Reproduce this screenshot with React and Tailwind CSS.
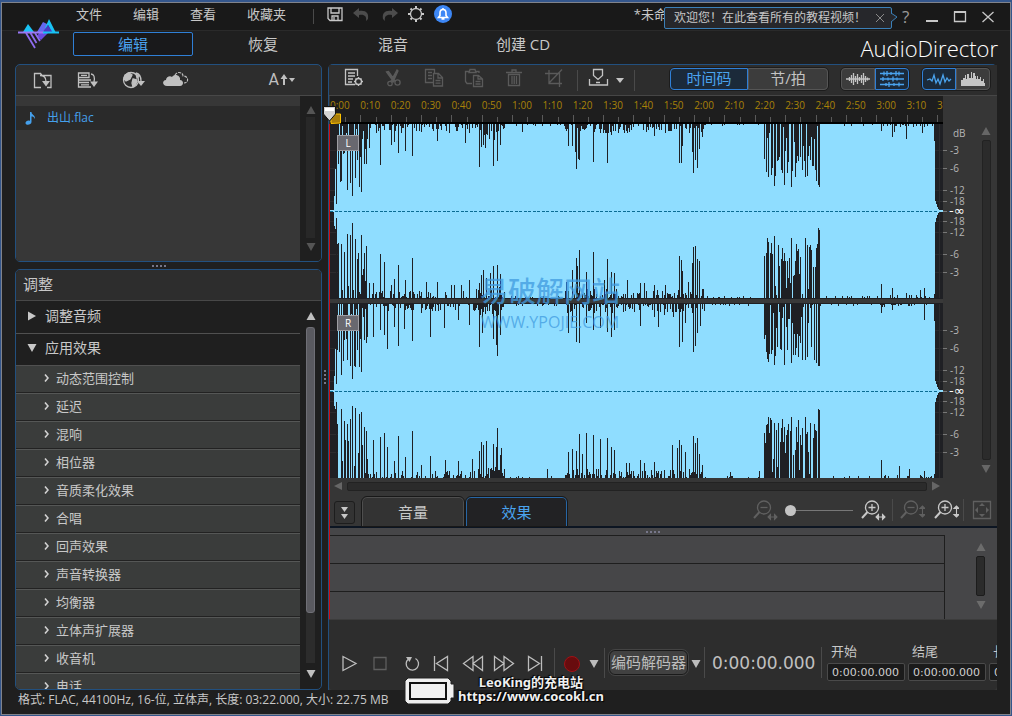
import React from "react";

const FONT = "font-['Open_Sans','Noto_Sans_CJK_SC',sans-serif]";

/* ---------- waveform data: [x, peak depth] pairs, one list per channel edge ---------- */

const L_TOP = [
  [6, 80], [8, 40], [10, 58], [11, 57], [13, 30], [17, 66], [20, 59], [22, 72], [25, 54], [27, 36], [29, 63], [31, 68], [34, 40], [36, 40],
  [46, 9], [50, 41], [61, 21], [64, 18], [68, 29], [71, 9], [75, 27], [82, 32], [91, 8], [107, 17], [119, 9], [135, 19], [139, 9],
  [149, 43], [151, 23], [153, 21], [155, 24], [159, 15], [163, 42], [164, 16], [167, 37], [170, 21], [192, 8], [238, 22], [242, 22],
  [245, 28], [246, 45], [248, 35], [249, 36], [256, 4], [263, 38], [277, 39], [281, 11], [294, 9], [297, 9], [323, 12],
  [334, 9], [348, 39], [350, 39], [351, 22], [361, 28], [362, 49], [364, 36], [366, 44], [368, 25], [371, 13],
  [433, 35], [435, 48], [437, 53], [440, 51], [441, 44], [443, 62], [447, 36], [450, 46], [451, 49], [453, 61], [456, 49], [460, 63],
  [463, 18], [465, 39], [467, 37], [469, 33], [471, 46], [474, 53], [476, 52], [479, 36], [482, 42], [485, 57], [487, 61], [488, 63],
  [550, 7], [561, 13], [563, 8], [575, 15], [591, 9],
];
const L_BOTTOM = [
  [6, 80], [8, 55], [11, 54], [14, 46], [17, 64], [20, 63], [22, 75], [25, 59], [28, 45], [31, 63], [34, 45], [36, 52],
  [39, 15], [43, 15], [50, 44], [54, 36], [61, 13], [64, 19], [68, 33], [75, 18], [82, 40], [96, 16], [107, 16], [121, 13], [124, 13],
  [131, 13], [139, 18], [149, 15], [151, 23], [153, 28], [156, 20], [160, 25], [163, 32], [167, 33], [170, 24], [236, 16],
  [242, 28], [246, 40], [247, 32], [249, 48], [256, 26], [263, 46], [274, 18], [277, 39], [281, 26], [284, 25], [297, 18], [309, 15],
  [313, 15], [323, 13], [334, 13], [348, 42], [350, 38], [351, 27], [357, 16], [361, 35], [362, 51], [364, 52], [366, 39], [368, 37], [372, 9],
  [433, 42], [435, 45], [436, 60], [437, 56], [439, 45], [440, 55], [443, 62], [447, 53], [450, 39], [451, 50], [453, 45], [456, 37],
  [460, 60], [464, 37], [466, 47], [467, 49], [469, 41], [474, 60], [476, 53], [479, 53], [482, 31], [485, 50], [486, 54], [487, 70], [488, 68],
  [550, 14], [561, 10], [575, 5], [589, 8], [593, 10],
];
const R_TOP = [
  [6, 80], [7, 46], [9, 48], [11, 71], [13, 57], [17, 56], [20, 62], [22, 75], [24, 62], [25, 63], [27, 46], [29, 63], [31, 68], [34, 36], [36, 39],
  [43, 33], [50, 26], [54, 31], [57, 45], [64, 23], [68, 42], [74, 25], [82, 37], [91, 9], [100, 33], [114, 24], [128, 16], [139, 21],
  [149, 43], [152, 29], [163, 35], [166, 41], [167, 52], [170, 31], [238, 29], [242, 18], [246, 38], [249, 39], [256, 19], [263, 26],
  [270, 24], [277, 28], [281, 33], [284, 26], [309, 22], [323, 13], [327, 23], [333, 11], [342, 13], [348, 43], [351, 38], [354, 19],
  [362, 48], [364, 42], [366, 29], [369, 22], [433, 35], [435, 48], [437, 58], [440, 50], [441, 46], [443, 61], [446, 43], [450, 46],
  [453, 61], [456, 46], [460, 59], [465, 44], [467, 53], [469, 39], [474, 56], [476, 53], [480, 43], [483, 56], [485, 59], [487, 62], [488, 62],
  [550, 9], [561, 6], [593, 16],
];
const R_BOTTOM = [
  [6, 76], [11, 69], [14, 57], [17, 54], [20, 59], [22, 72], [25, 70], [29, 64], [31, 66], [34, 51], [36, 47], [43, 38], [50, 41], [54, 45],
  [57, 31], [64, 17], [68, 42], [75, 21], [82, 47], [91, 13], [100, 22], [115, 18], [128, 17], [142, 19], [149, 27], [151, 36], [153, 33],
  [156, 37], [163, 34], [166, 31], [167, 50], [170, 23], [171, 30], [217, 9], [238, 26], [242, 29], [246, 27], [249, 44], [252, 24],
  [256, 45], [263, 43], [270, 39], [277, 40], [281, 31], [284, 28], [296, 15], [299, 15], [309, 18], [313, 15], [323, 16],
  [341, 33], [346, 30], [348, 38], [350, 33], [354, 26], [362, 42], [364, 35], [366, 40], [368, 24], [371, 13], [399, 6], [428, 7],
  [433, 45], [435, 53], [437, 61], [439, 60], [440, 58], [443, 55], [447, 55], [450, 50], [451, 59], [453, 51], [457, 54], [460, 61],
  [464, 28], [465, 51], [467, 58], [469, 43], [471, 50], [474, 61], [476, 46], [479, 55], [482, 40], [483, 54], [485, 47], [487, 69], [488, 68],
  [550, 18], [568, 12], [578, 9], [593, 7],
];

/* low-level texture between the named peaks: [from, to, density, depth] */
const TEXTURE = [
  [12, 40, 0.6, 40],
  [40, 146, 0.42, 7],
  [146, 175, 0.7, 11],
  [175, 235, 0.12, 2],
  [235, 290, 0.6, 9],
  [290, 345, 0.5, 8],
  [345, 374, 0.6, 9],
  [374, 432, 0.12, 2],
  [433, 489, 0.65, 56],
  [489, 548, 0.08, 2],
  [548, 604, 0.3, 3],
];

const noise = (n) => {
  const v = Math.sin(n * 127.1 + 31.7) * 43758.5453;
  return v - Math.floor(v);
};

function edgePath(peaks, seed, fromBottom) {
  const depth = {};
  TEXTURE.forEach(([a, b, density, max]) => {
    for (let x = a; x < b; x++) {
      if (noise(x + seed) < density) depth[x] = 1 + Math.floor(noise(x * 3 + seed) * max);
    }
  });
  peaks.forEach(([x, d]) => {
    depth[x] = d;
  });
  return Object.entries(depth)
    .map(([x, d]) => (fromBottom ? `M${x} 174v-${d}h1v${d}z` : `M${x} 0h1v${d}h-1z`))
    .join("");
}

const GRID = [26, 44, 66, 77, 97, 108, 130, 148];

function Channel({ name, top, bottom, seed }) {
  return (
    <div className="relative h-[174px] bg-[#1f2024]">
      <svg
        className="block h-full w-full"
        viewBox="0 0 612 174"
        preserveAspectRatio="none"
        shapeRendering="crispEdges"
        role="img"
        aria-label={`${name} channel waveform`}
      >
        {GRID.map((y) => (
          <path key={y} d={`M0 ${y}h612`} stroke="#2b2b2e" />
        ))}
        <path d="M609 0v174" stroke="#2b2b2e" />
        <path
          fill="#8fddff"
          d="M0 86h4V72h1V45h2V14h1V0h595v17h1v60h1v3h1v3h1v2h1v1h4v2h-4v1h-1v2h-1v3h-1v4h-1v72h-1v4H8v-54h-1v-15h-2V102h-1V88H0z"
        />
        <path fill="#1f2024" d={edgePath(top, seed, false)} />
        <path fill="#1f2024" d={edgePath(bottom, seed + 700, true)} />
        <path d="M0 87.5h606" stroke="#0a6c93" strokeDasharray="3 1.5" />
      </svg>
      <span className="absolute left-[7px] top-[11px] flex h-[16px] w-[22px] items-center justify-center border border-[#9d9da3] bg-[#68686f] text-[10px] leading-none text-white">
        {name}
      </span>
    </div>
  );
}

const DB = [
  [26, "-3"], [44, "-6"], [66, "-12"], [77, "-18"], [87, "-∞"], [97, "-18"], [108, "-12"], [130, "-6"], [148, "-3"],
];

function DbScale() {
  return (
    <svg className="h-[382px] w-[32px] shrink-0" viewBox="0 0 32 382" fontSize="10" fill="#b5b5b5">
      <text x="10" y="41">dB</text>
      {[28, 208].map((o) =>
        DB.map(([y, label], i) => (
          <g key={`${o}-${i}`}>
            <path d={`M0 ${o + y + 0.5}h4`} stroke="#777" />
            {label === "-∞" ? (
              <text x="6" y={o + y + 4} fill="#fff" fontSize="13" fontFamily="DejaVu Sans">
                {label}
              </text>
            ) : (
              <text x="7" y={o + y + 4}>
                {label}
              </text>
            )}
          </g>
        ))
      )}
    </svg>
  );
}

/* ---------- small shared parts ---------- */

function Tri({ dir, className = "" }) {
  const d = { up: "M5 1L9.500 9H.5z", down: "M.5 1h9L5 9z", right: "M1 .5l8 4.500-8 4.500z", left: "M9 1L1 5l8 4z" }[dir];
  return (
    <svg className={`h-[10px] w-[10px] shrink-0 ${className}`} viewBox="0 0 10 10" fill="currentColor" aria-hidden="true">
      <path d={d} />
    </svg>
  );
}

function IconButton({ label, className = "", children, w = 22, h = 20 }) {
  return (
    <button type="button" aria-label={label} className={`flex shrink-0 items-center justify-center ${className}`}>
      <svg width={w} height={h} viewBox={`0 0 ${w} ${h}`} fill="none" stroke="currentColor" strokeWidth="1.3" aria-hidden="true">
        {children}
      </svg>
    </button>
  );
}

const Dots = ({ vertical }) => (
  <span className={`flex gap-[2px] ${vertical ? "flex-col" : ""}`}>
    {[0, 1, 2, 3].map((i) => (
      <span key={i} className="h-[2px] w-[2px] bg-[#77778a]" />
    ))}
  </span>
);

const Divider = ({ className = "" }) => <span className={`w-px shrink-0 bg-[#4a4a4a] ${className}`} />;

/* ---------- header ---------- */

function Logo() {
  return (
    <svg className="absolute left-[15px] top-[13px] h-[36px] w-[44px]" viewBox="0 0 44 36" aria-hidden="true">
      <path d="M6 16l5-8 6 8z" fill="#19c3f5" />
      <path d="M20 16l6-10 4 2 2 8z" fill="#6468f2" />
      <path d="M28 12l4-9 7 14h-4l-4-8-2 4z" fill="#19c3f5" />
      <path d="M25 17l6-8 5 8z" fill="#4a3bc4" />
      <path d="M22 17h9l-7 7-4-4z" fill="#6a4ae0" />
      <path d="M9 17l9 15M13.500 17l6 10M18 17l5 8" stroke="#8e6cf0" strokeWidth="1.800" />
      <path d="M1 16.500h26" stroke="#9a78f5" strokeWidth="2" />
      <path d="M26 16.500h16" stroke="#19c3f5" strokeWidth="2" />
    </svg>
  );
}

function Header() {
  return (
    <header className="relative shrink-0">
      <div className="flex h-[28px] items-center border-b border-[#2a2a2a] bg-[#191919] pl-[74px] pr-[14px]">
        <nav className="flex items-center gap-[31px] pb-[5px] text-[13px] leading-none">
          {["文件", "编辑", "查看", "收藏夹"].map((m) => (
            <button type="button" key={m}>
              {m}
            </button>
          ))}
        </nav>
        <Divider className="ml-[27px] h-[15px]" />
        <div className="ml-[10px] flex items-center gap-[5px] pb-[6px]">
          <IconButton label="保存" className="text-[#c8c8c8]">
            <path d="M4 4h14v12.500H6L4 14.500zM7 4v5h8V4M8 16.500V12h6v4.500M10 13v3" strokeWidth="1.300" />
          </IconButton>
          <IconButton label="撤销" className="text-[#4c4c4c]">
            <path d="M2 9l6-5v3c7-1 10 2 9 8l-2 2c1-5-2-7-7-6v3z" fill="currentColor" stroke="none" />
          </IconButton>
          <IconButton label="重做" className="text-[#4c4c4c]">
            <path d="M20 9l-6-5v3c-7-1-10 2-9 8l2 2c-1-5 2-7 7-6v3z" fill="currentColor" stroke="none" />
          </IconButton>
          <IconButton label="设置" className="text-[#c8c8c8]">
            <circle cx="11" cy="10" r="5.500" />
            <path d="M11 2v2.500M11 15.500V18M3 10h2.500M16.500 10H19M5.500 4.500l1.500 1.500M15 14l1.500 1.500M16.500 4.500L15 6M7 14l-1.500 1.500" strokeWidth="2" />
          </IconButton>
          <IconButton label="通知" className="text-white">
            <circle cx="11" cy="10" r="9" fill="#3d87f5" stroke="none" />
            <path d="M6.500 13.500h9L14 11.500V9c0-2-1-3.500-3-3.500S8 7 8 9v2.500zM11 4v1.500M9.500 15h3" strokeWidth="1.600" />
          </IconButton>
        </div>
        <span className="ml-auto mr-[170px] pb-[5px] text-[13px] leading-none">*未命名的新项目</span>
        <div className="flex items-center gap-[10px] text-[#c8c8c8]">
          <a href="#help" className="w-[12px] text-[17px] leading-none text-[#9a9a9a]">?</a>
          <IconButton label="最小化" w={16} h={16}>
            <path d="M2 12h12" strokeWidth="2" />
          </IconButton>
          <IconButton label="最大化" w={16} h={16} className="ml-[2px]">
            <path d="M2.500 3h11v9.500h-11z" />
            <path d="M2 3h12" strokeWidth="2" />
          </IconButton>
          <IconButton label="关闭" w={16} h={16} className="ml-[2px]">
            <path d="M2.500 3l11 10M13.500 3l-11 10" />
          </IconButton>
        </div>
      </div>

      <div className="flex h-[33px] items-center justify-between pl-[71px] pr-[12px]">
        <div className="flex gap-[10px] pb-[7px] text-[15px] leading-none">
          <button type="button" className="h-[24px] w-[120px] rounded-[2px] border border-[#2f7fd6] bg-[#19191b] text-[#4aa3ee]">
            编辑
          </button>
          {["恢复", "混音", "创建 CD"].map((t) => (
            <button type="button" key={t} className="h-[24px] w-[120px]">
              {t}
            </button>
          ))}
        </div>
        <h1 className="font-['Open_Sans',sans-serif] text-[22px] font-light leading-none text-white">AudioDirector</h1>
      </div>

      <Logo />
      <div className="absolute right-[118px] top-[4px] flex h-[22px] w-[228px] items-center justify-between rounded-[2px] border border-[#3b80b8] bg-[#26272b] pl-[9px] pr-[6px] text-[12px] leading-none">
        <span className="whitespace-nowrap">欢迎您！在此查看所有的教程视频！</span>
        <button type="button" aria-label="关闭提示">
          <svg width="10" height="10" viewBox="0 0 10 10" stroke="#8a8a8a" aria-hidden="true">
            <path d="M1 1l8 8M9 1l-8 8" />
          </svg>
        </button>
        <svg className="absolute -right-[7px] top-[4px]" width="8" height="11" viewBox="0 0 8 11" fill="#26272b" stroke="#3b80b8" aria-hidden="true">
          <path d="M1 1l6 4-6 5" />
        </svg>
      </div>
    </header>
  );
}

/* ---------- left column ---------- */

const EFFECTS = ["动态范围控制", "延迟", "混响", "相位器", "音质柔化效果", "合唱", "回声效果", "声音转换器", "均衡器", "立体声扩展器", "收音机", "电话"];

function Library() {
  return (
    <section className="flex h-[198px] shrink-0 flex-col overflow-hidden rounded-[5px] border border-[#22507f] bg-[#2d2d2d]">
      <div className="flex h-[31px] shrink-0 items-center border-b border-[#484848] pl-[16px] pr-[26px] text-[#c0c0c0]">
        <IconButton label="导入文件" className="mr-[22px]">
          <path d="M9 17.500H2.500V3.500h6l1.500 2h9v12h-4M8 5.500c4 0 6 2 6 6" />
          <path d="M10 11h8l-4 5.500z" fill="currentColor" stroke="none" />
        </IconButton>
        <IconButton label="导入轨道" className="mr-[23px]">
          <path d="M13 3H2.500v4.500H13zM15 10H2.500M2.500 7.500v5H13M2.500 12.500V17H15M5 5.300h6M5 14.800h8M15 4c3 0 4 3 3 8" />
          <path d="M14 11.500h8l-4 5.500z" fill="currentColor" stroke="none" />
        </IconButton>
        <IconButton label="下载" className="mr-[17px]" w={24}>
          <circle cx="10" cy="10" r="7.500" />
          <path d="M4 5l4-2 3 2-2 4-4 2-2-2zM12 9l4 1-1 4-3 3-1-4zM15 4l3 2-2 2z" fill="currentColor" />
          <path d="M15 3c4 1 5 4 5 8" />
          <path d="M16 11h8l-4 5z" fill="currentColor" stroke="none" />
        </IconButton>
        <IconButton label="云端" w={28}>
          <path d="M13 5c2-4 8-3 8 1 6 0 6 7 1 7" strokeWidth="1.100" strokeDasharray="3 1" />
          <path d="M5 16c-5 0-5-6-1-6 0-3 4-5 6-3 3-4 9-1 8 3 4 0 4 6 0 6z" fill="currentColor" stroke="none" />
        </IconButton>
        <button type="button" aria-label="排序" className="ml-auto flex items-center font-['Roboto',sans-serif] text-[16px] leading-none">
          A
          <svg width="9" height="12" viewBox="0 0 9 12" fill="currentColor" aria-hidden="true">
            <path d="M5 0l3.500 5H6v6H4V5H1.500z" />
          </svg>
          <svg className="ml-px" width="6" height="4" viewBox="0 0 6 4" fill="currentColor" aria-hidden="true">
            <path d="M0 0h6L3 4z" />
          </svg>
        </button>
      </div>
      <div className="flex flex-1 bg-[#1f1f1f]">
        <div className="flex-1 bg-[#373737] pt-[10px]">
          <div className="flex h-[24px] items-center gap-[11px] bg-[#2a2a2a] pl-[9px] text-[12px] leading-none text-[#45a0ec]">
            <svg width="11" height="13" viewBox="0 0 11 13" fill="currentColor" aria-hidden="true">
              <path d="M5 0h1.500c0 3 4 3 3.500 7C9 5 8 4.500 6.500 4.500V10c0 3-6 4-6 1 0-2 3-3 4.500-2z" />
            </svg>
            出山.flac
          </div>
        </div>
        <div className="flex w-[21px] flex-col items-center justify-between py-[9px] text-[#555]">
          <Tri dir="up" />
          <span className="mb-[4px] mt-[2px] w-[9px] flex-1 bg-[#282828]" />
          <Tri dir="down" />
        </div>
      </div>
    </section>
  );
}

function Adjust() {
  return (
    <section className="flex min-h-0 flex-1 flex-col overflow-hidden rounded-[5px] border border-[#22507f] bg-[#1f1f1f]">
      <h2 className="flex h-[31px] shrink-0 items-center border-b border-[#484848] bg-[#2d2d2d] pb-[2px] pl-[7px] text-[15px] leading-none">调整</h2>
      <div className="flex min-h-0 flex-1">
        <div className="h-0 min-h-full flex-1 overflow-hidden">
          <button type="button" className="flex h-[33px] w-full items-center gap-[8px] border-b border-[#505050] pb-[3px] pl-[11px] text-[14px] leading-none">
            <Tri dir="right" /> 调整音频
          </button>
          <button type="button" className="flex h-[32px] w-full items-center gap-[8px] border-b border-[#505050] pb-[3px] pl-[11px] text-[14px] leading-none">
            <Tri dir="down" /> 应用效果
          </button>
          <ul>
            {EFFECTS.map((e) => (
              <li key={e} className="h-[28px] border-b border-[#555756] bg-[#3a3c3b]">
                <button type="button" className="flex h-[27px] w-full items-center gap-[7px] border-b border-[#222] pb-[2px] pl-[28px] text-[13px] leading-none">
                  <svg width="5" height="8" viewBox="0 0 5 8" fill="none" stroke="#d0d0d0" strokeWidth="1.600" aria-hidden="true">
                    <path d="M1 .5L4 4 1 7.500" />
                  </svg>
                  {e}
                </button>
              </li>
            ))}
          </ul>
        </div>
        <div className="flex w-[21px] flex-col items-center py-[10px] text-[#c0c0c0]">
          <Tri dir="up" />
          <span className="mt-[6px] flex w-[9px] flex-1 flex-col bg-[#2c2c2c]">
            <span className="h-[85%] rounded-[3px] border border-[#6f6f76] bg-[#5a5a60]" />
          </span>
          <Tri dir="down" className="mt-[6px]" />
        </div>
      </div>
    </section>
  );
}

/* ---------- editor ---------- */

const TIMES = [
  "0:00", "0:10", "0:20", "0:30", "0:40", "0:50", "1:00", "1:10", "1:20", "1:30", "1:40",
  "1:50", "2:00", "2:10", "2:20", "2:30", "2:40", "2:50", "3:00", "3:10",
];

function Tick({ label }) {
  return (
    <div className="flex min-w-0 flex-[10_1_0%] flex-col justify-between">
      <span className="whitespace-nowrap pt-[4px] text-[10px] leading-[10px]">{label}</span>
      <span className="flex items-end">
        <span className="h-[7px] flex-1 border-l border-[#5a5a5a]" />
        <span className="h-[5px] flex-1 border-l border-[#5a5a5a]" />
      </span>
    </div>
  );
}

function Toolbar() {
  return (
    <div className="flex h-[31px] shrink-0 items-center border-b border-[#464646] bg-[#2d2d2d] pl-[14px] pr-[6px] text-[#5a5a5a]">
      <div className="flex items-center gap-[18px] pb-[5px]">
        <IconButton label="属性" className="text-[#c4c4c4]">
          <path d="M12 16.500H2.500v-15h12V8M5 5h7M5 8h7M5 11h5M5 14h4" />
          <circle cx="15.500" cy="13.500" r="3" />
          <path d="M15.500 9v2M15.500 16v2M11 13.500h2M18 13.500h2M12.500 10.500l1 1M17.500 15.500l1 1M18.500 10.500l-1 1M13.500 15.500l-1 1" />
        </IconButton>
        <IconButton label="剪切">
          <path d="M3.500 4l2-.500 6.500 9-1.500 1zM14 2l1 1-5 11-2-1z" fill="currentColor" />
          <circle cx="7" cy="15.500" r="2.200" />
          <circle cx="14.500" cy="14.500" r="2.600" />
        </IconButton>
        <IconButton label="复制">
          <path d="M10 14.500H2.500v-13h9V5M5 4.500h4M5 7.500h4M5 10.500h4M10.500 5.500h5l4 4v8.500h-9zM15 5.500V10h4.500M12.500 12.500h5M12.500 15.200h5" />
        </IconButton>
        <IconButton label="粘贴">
          <path d="M9 15.500H4l-1.500-2V3.500H6M13 3.500h3V5M6 4.500l1-3h5l1 3zM10.500 7.500h5l4 3.500v7.500h-9zM15 7.500V11h4.500M12.500 13.500h5M12.500 16h5" />
        </IconButton>
        <IconButton label="删除">
          <path d="M3 4.500h16M9 4V2h4v2M5.500 6.500h11v11h-11zM9 8v8M11.200 8v8M13.500 8v8" />
        </IconButton>
        <IconButton label="裁剪">
          <path d="M2 5.500h14.500V19M6 2v13.500h13M19 1.500L6 15" />
        </IconButton>
      </div>
      <Divider className="ml-[12px] h-[21px]" />
      <IconButton label="标记" className="ml-[8px] pb-[4px] text-[#c4c4c4]" w={24}>
        <path d="M7.500 1.500h9v6L12 11.500l-4.500-4zM3.500 11v6h18v-6M10 14.500h4" />
      </IconButton>
      <svg className="ml-[6px] text-[#c4c4c4]" width="8" height="5" viewBox="0 0 8 5" fill="currentColor" aria-hidden="true">
        <path d="M0 0h8L4 5z" />
      </svg>
      <Divider className="ml-[10px] h-[21px]" />

      <div className="mb-[3px] ml-auto flex h-[24px] rounded-[5px] border border-[#1c1c1c] text-[15px] leading-none">
        <button type="button" className="w-[78px] rounded-l-[4px] border border-[#2f7fd6] bg-[#1b2a3a] text-[#4aa3ee]">时间码</button>
        <button type="button" className="w-[80px] rounded-r-[4px] border border-[#555] bg-[#3c3c3c] text-[#c4c4c4]">节/拍</button>
      </div>
      <div className="mb-[3px] ml-[11px] flex h-[24px] rounded-[5px] border border-[#1c1c1c]">
        <IconButton label="合并声道" className="w-[34px] rounded-l-[4px] border border-[#555] bg-[#3c3c3c] text-[#c4c4c4]" w={26}>
          <path d="M1 10h24M4.500 8v4M6.500 6v8M8.500 4v12M10.500 7v6M12.500 5v10M14.500 8v4M16.500 6v8M18.500 4v12M20.500 7v6M22.500 8.500v3" />
        </IconButton>
        <IconButton label="分离声道" className="w-[34px] rounded-r-[4px] border border-[#2f7fd6] bg-[#1b2a3a] text-[#4aa3ee]" w={26}>
          <path d="M1 4.500h24M1 10h24M1 15.500h24M5 2.500v4M8 2v5M12 3v3M17 2v5M20 2.500v4M4 8v4M9 8.500v3M14 7.500v5M18 8.500v3M7 14v3M10 13v5M15 14v3M20 13.500v4" />
        </IconButton>
      </div>
      <div className="mb-[3px] ml-[11px] flex h-[24px] rounded-[5px] border border-[#1c1c1c]">
        <IconButton label="波形" className="w-[34px] rounded-l-[4px] border border-[#2f7fd6] bg-[#1b2a3a] text-[#4aa3ee]" w={26}>
          <path d="M1 11l3-1 2 2 2-6 2 8 2-4 2 5 3-9 2 7 2-4 2 3 2-2" />
        </IconButton>
        <IconButton label="频谱" className="w-[34px] rounded-r-[4px] border border-[#555] bg-[#3c3c3c] text-[#c4c4c4]" w={26}>
          <path d="M1 17v-6h2v-2h2V6h1v4h1V5h2v4h2V3h1v6h1V4h2v3h1v3h1V7h1v3h2V8h1v4h2v-2h1v4h1v3z" fill="currentColor" stroke="none" />
        </IconButton>
      </div>
    </div>
  );
}

function Zoomer({ label, plus, arrows, className }) {
  return (
    <IconButton label={label} className={className} w={26} h={22}>
      <circle cx="12" cy="8.500" r="6.500" />
      <path d="M7.500 13L2 19" strokeWidth="2" />
      <path d={plus ? "M8.500 8.500h7M12 5v7" : "M8.500 8.500h7"} />
      {arrows === "h" ? (
        <path d="M16 18h9M18.500 15.500L16 18l2.500 2.500zM22.500 15.500L25 18l-2.500 2.500z" fill="currentColor" strokeWidth="1.100" />
      ) : (
        <path d="M23.500 7v11M21 9.500L23.500 7 26 9.500zM21 15.500l2.500 2.500 2.500-2.500z" fill="currentColor" strokeWidth="1.100" />
      )}
    </IconButton>
  );
}

function TabBar() {
  return (
    <div className="flex h-[34px] shrink-0 items-end border-b-2 border-[#0c1522] bg-[#363636] pl-[5px] pr-[5px]">
      <button type="button" aria-label="折叠" className="mb-[2px] flex h-[23px] w-[21px] flex-col items-center justify-center gap-[2px] rounded-[3px] border border-[#1d1d1d] bg-[#333] text-[#c8c8c8]">
        {[0, 1].map((i) => (
          <svg key={i} width="7" height="5" viewBox="0 0 7 5" fill="currentColor" aria-hidden="true">
            <path d="M0 0h7L3.500 5z" />
          </svg>
        ))}
      </button>
      <button type="button" className="ml-[7px] h-[29px] w-[102px] rounded-t-[5px] border border-b-0 border-[#4e4e4e] bg-[#333] text-[15px] leading-none outline outline-[#181818]">
        音量
      </button>
      <button type="button" className="ml-[2px] h-[29px] w-[101px] rounded-t-[5px] border border-b-0 border-[#2766a5] bg-[#222224] text-[15px] leading-none text-[#4aa3ee] outline outline-[#181818]">
        效果
      </button>
      <div className="mb-[5px] ml-auto flex items-center text-[#c8c8c8]">
        <Zoomer label="水平缩小" arrows="h" className="text-[#606060]" />
        <input type="range" aria-label="缩放" defaultValue="0" className="mx-[7px] h-[12px] w-[68px] appearance-none bg-[linear-gradient(#777,#777)] bg-[length:100%_1px] bg-center bg-no-repeat [&::-webkit-slider-thumb]:h-[11px] [&::-webkit-slider-thumb]:w-[11px] [&::-webkit-slider-thumb]:appearance-none [&::-webkit-slider-thumb]:rounded-full [&::-webkit-slider-thumb]:bg-[#c4c4c4]" />
        <Zoomer label="水平放大" plus arrows="h" />
        <Divider className="ml-[6px] mr-[6px] h-[22px]" />
        <Zoomer label="垂直缩小" arrows="v" className="text-[#606060]" />
        <Zoomer label="垂直放大" plus arrows="v" className="ml-[8px]" />
        <Divider className="ml-[4px] mr-[8px] h-[22px]" />
        <IconButton label="全部适合" className="text-[#606060]" w={20} h={20}>
          <path d="M1.500 1.500h17v17h-17z" />
          <path d="M10 3l3 3H7zM10 17l3-3H7zM3 10l3-3v6zM17 10l-3-3v6z" fill="currentColor" stroke="none" />
        </IconButton>
      </div>
    </div>
  );
}

function Lane() {
  return (
    <div className="relative flex h-[91px] shrink-0 bg-[#464648]">
      <span className="absolute left-1/2 top-[3px] -ml-[17px]">
        <Dots />
      </span>
      <div className="mt-[7px] ml-px flex flex-1 flex-col border-r border-t border-[#1e1e1e]">
        <span className="h-[28px] border-b border-[#1e1e1e]" />
        <span className="h-[28px] border-b border-[#1e1e1e]" />
      </div>
      <div className="flex w-[52px] flex-col items-center pb-[9px] pl-[19px] pt-[14px] text-[#6c6c6c]">
        <Tri dir="up" />
        <span className="my-[4px] w-[9px] flex-1 rounded-[2px] border border-[#1c1c1c] bg-[#2b2b2b]" />
        <Tri dir="down" />
      </div>
    </div>
  );
}

function Field({ label }) {
  const id = `f-${label}`;
  return (
    <div className="shrink-0">
      <label htmlFor={id} className="mb-[5px] block pl-[4px] text-[13px] leading-[14px]">{label}</label>
      <input
        id={id}
        defaultValue="0:00:00.000"
        className="block h-[18px] w-[78px] rounded-[2px] border border-[#4a4a4a] bg-[#1b1b1b] px-[4px] font-['DejaVu_Sans',sans-serif] text-[11px] leading-none text-[#d0d0d0]"
      />
    </div>
  );
}

function Transport() {
  return (
    <div className="flex min-h-[70px] flex-1 items-end overflow-hidden rounded-b-[4px] border-t border-[#3c3c3c] bg-[#2d2d2d] pb-[9px] pl-[9px]">
      <div className="flex h-[37px] shrink-0 items-center text-[#bcbcbc]">
        <IconButton label="播放" className="mr-[9px]"><path d="M5 3.500v14l13-7z" /></IconButton>
        <IconButton label="停止" className="mr-[10px] text-[#5f5f5f]"><path d="M5 4.500h12v12H5z" /></IconButton>
        <IconButton label="循环" className="mr-[7px]">
          <path d="M14.500 5.500A6.200 6.200 0 1 1 7.500 6" />
          <path d="M5 4h6l-2.500 5z" fill="currentColor" stroke="none" />
        </IconButton>
        <IconButton label="开头" className="mr-[10px]"><path d="M4.500 3v15M17.500 3.500v14l-11-7z" /></IconButton>
        <IconButton label="后退" className="mr-[9px]"><path d="M11 3.500v14l-9.500-7zM20.500 3.500v14L11 10.500z" /></IconButton>
        <IconButton label="前进" className="mr-[9px]"><path d="M1.500 3.500v14l9.500-7zM11 3.500v14l9.500-7z" /></IconButton>
        <IconButton label="结尾"><path d="M4.500 3.500v14l11-7zM17.500 3v15" /></IconButton>
        <Divider className="ml-[8px] h-[30px]" />
        <button type="button" aria-label="录音" className="ml-[9px] mt-[2px] h-[16px] w-[16px] rounded-full border border-[#a01216] bg-[#680c0e]" />
        <Tri dir="down" className="ml-[9px] mt-[3px]" />
        <Divider className="ml-[5px] h-[30px]" />
        <button type="button" className="ml-[4px] h-[25px] w-[79px] whitespace-nowrap rounded-[6px] border border-[#1a1a1a] bg-[#414141] text-center text-[15px] leading-none outline outline-[#444]">
          编码解码器
        </button>
        <Tri dir="down" className="ml-[3px] mt-[3px]" />
        <Divider className="ml-[3px] h-[31px]" />
        <span className="ml-[7px] w-[109px] pt-[2px] font-['DejaVu_Sans',sans-serif] text-[17px] leading-none text-[#c0c0c0]">0:00:00.000</span>
        <Divider className="h-[31px]" />
      </div>
      <div className="ml-[5px] flex gap-[3px]">
        <Field label="开始" />
        <Field label="结尾" />
        <Field label="长度" />
      </div>
    </div>
  );
}

function Editor() {
  return (
    <main className="flex min-w-0 flex-1 flex-col rounded-t-[5px] border-l border-t border-[#22507f] bg-[#363636]">
      <Toolbar />
      <div className="relative flex flex-1 flex-col">
        <div className="flex bg-[#363636]">
          <div className="min-w-0 flex-1 pl-px">
            <div className="flex h-[28px] overflow-hidden border-b-2 border-black bg-[#1e1e1e] text-[#a98208]">
              {TIMES.map((t) => (
                <Tick key={t} label={t} />
              ))}
              <div className="flex min-w-0 flex-[2_1_0%] flex-col justify-between overflow-hidden">
                <span className="pt-[4px] text-[10px] leading-[10px]">3:20</span>
                <span className="h-[7px] border-l border-[#5a5a5a]" />
              </div>
            </div>
            <Channel name="L" top={L_TOP} bottom={L_BOTTOM} seed={11} />
            <div className="h-[6px] border-y border-[#1f2024] bg-[#393939]" />
            <Channel name="R" top={R_TOP} bottom={R_BOTTOM} seed={231} />
          </div>
          <DbScale />
          <div className="flex w-[22px] flex-col items-center pb-[4px] pt-[30px] text-[#666]">
            <Tri dir="up" />
            <span className="my-[4px] w-[9px] flex-1 rounded-[2px] border border-[#222] bg-[#2b2b2b]" />
            <Tri dir="down" />
          </div>
        </div>
        <div className="flex h-[16px] shrink-0 items-center pl-[4px] pr-[56px] text-[#666]">
          <Tri dir="left" />
          <span className="mx-[4px] h-[9px] flex-1 rounded-[2px] border border-[#222] bg-[#2b2b2b]" />
          <Tri dir="right" />
        </div>
        <TabBar />
        <Lane />
        <Transport />

        <div className="pointer-events-none absolute left-0 top-[28px] h-[495px] w-px bg-[#d0090e]" />
        <svg className="absolute -left-[6px] top-[10px]" width="20" height="18" viewBox="0 0 20 18" aria-hidden="true">
          <path d="M8 17.500v-4l4-5.500h5.500v9z" fill="#a87d0a" stroke="#ffc400" />
          <path d="M.5 .5h12v7.500L6.500 15 .5 8z" fill="#d4d4d4" stroke="#111" />
          <path d="M2 2h9v3H2z" fill="#fff" />
        </svg>
        <div className="pointer-events-none absolute left-[151px] top-[180px] w-[140px] text-center text-[#3f9be0]/75">
          <p className="whitespace-nowrap text-[28px] font-medium leading-[30px]">易破解网站</p>
          <p className="whitespace-nowrap text-[16px] leading-[32px]">WWW.YPOJIE.COM</p>
        </div>
      </div>
    </main>
  );
}

export default function App() {
  return (
    <div className={`flex h-screen flex-col border border-t-2 border-[#34568c] bg-[#1f1f1f] text-[#c8c8c8] ${FONT}`}>
      <div className="relative flex min-h-0 flex-1 flex-col border border-[#80838c]">
        <Header />
        <div className="flex min-h-0 flex-1 pl-[13px] pr-[13px]">
          <aside className="flex w-[307px] shrink-0 flex-col">
            <Library />
            <div className="flex h-[7px] shrink-0 items-center justify-center pr-[19px]">
              <Dots />
            </div>
            <Adjust />
          </aside>
          <div className="flex w-[6px] shrink-0 items-center justify-center">
            <Dots vertical />
          </div>
          <Editor />
        </div>
        <footer className="flex h-[24px] shrink-0 items-center pb-[4px] pl-[16px] text-[12px] leading-none">
          格式: FLAC, 44100Hz, 16-位, 立体声, 长度: 03:22.000, 大小: 22.75 MB
        </footer>
        <div className="pointer-events-none absolute bottom-[8px] left-[402px] flex items-center gap-[2px] text-[#f0f0f0]">
          <svg width="52" height="28" viewBox="0 0 52 28" aria-hidden="true">
            <path d="M4 1h40l3 3v3h3v14h-3v3l-3 3H4l-3-3V4z" fill="#f0f0f0" stroke="#222" />
            <path d="M6 6h36v16H6z" fill="#f0f0f0" stroke="#111" strokeWidth="2" />
          </svg>
          <p className="pb-[3px] text-center font-['Noto_Sans','Noto_Sans_CJK_SC',sans-serif] text-[13px] font-bold leading-[14px] [text-shadow:1px_1px_1px_#000,-1px_-1px_1px_#000]">
            LeoKing的充电站
            <br />
            https://www.cocokl.cn
          </p>
        </div>
      </div>
    </div>
  );
}
